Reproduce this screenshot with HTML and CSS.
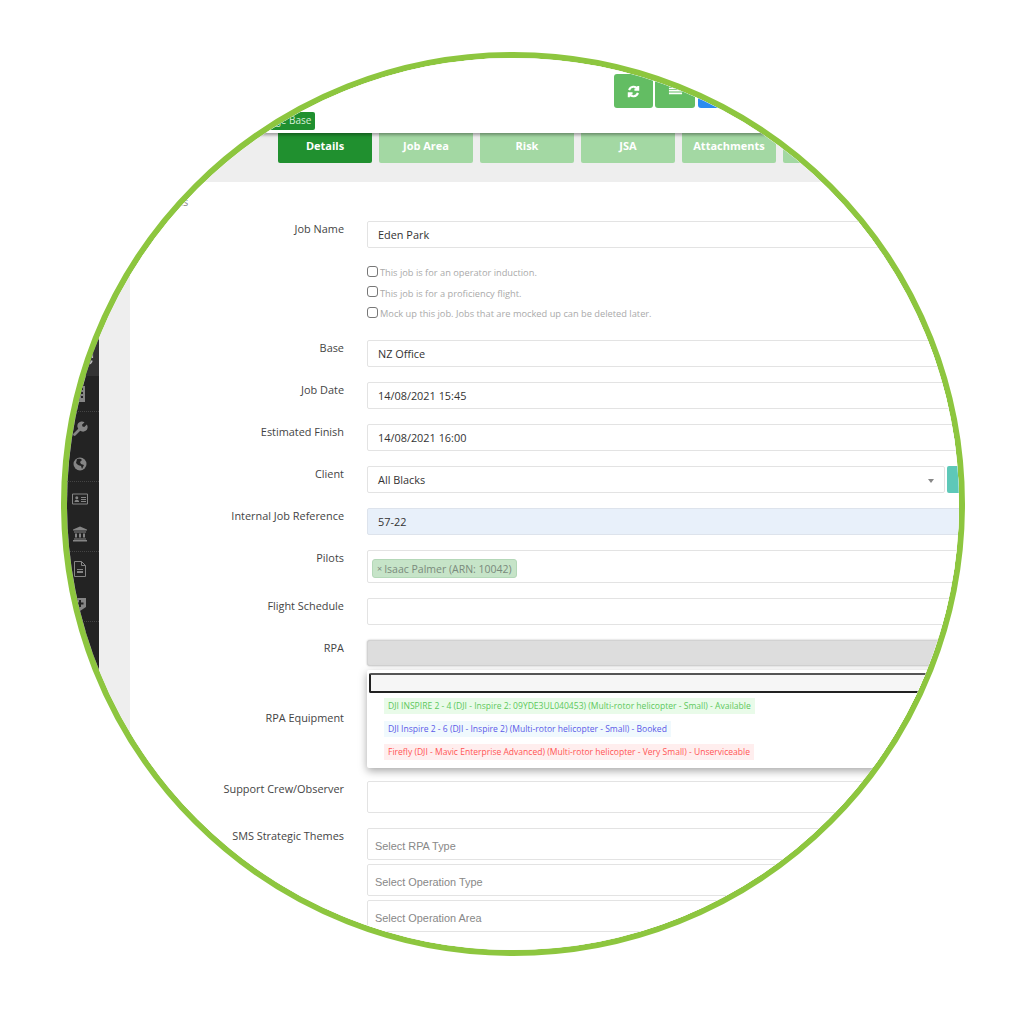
FILE: index.html
```html
<!DOCTYPE html>
<html lang="en">
<head>
<meta charset="utf-8">
<title>Job Details</title>
<link rel="stylesheet" href="styles.css">
</head>
<body>
<div class="ring">
  <div class="app">
    <nav class="sidebar">
      <div class="nav-item active"><svg class="ico" viewBox="0 0 16 16"><path d="M13 2v4h-4M3 14v-4h4M3.300 6.500A5 5 0 0 1 12.500 5.500M12.700 9.500A5 5 0 0 1 3.500 10.500" fill="none" stroke="currentColor" stroke-width="2.200"/></svg></div>
      <div class="nav-item sep"><svg class="ico" viewBox="0 0 16 16"><path d="M3 0h10v16H3z" fill="currentColor"/><path d="M5 2h2v2H5zM9 2h2v2H9zM5 6h2v2H5zM9 6h2v2H9zM5 10h2v2H5zM9 10h2v2H9z" fill="#232323"/></svg></div>
      <div class="nav-item"><svg class="ico" viewBox="0 0 16 16"><path d="M2.500 13.500 8 8" fill="none" stroke="currentColor" stroke-width="2.800" stroke-linecap="round"/><path d="M7.300 8.700A4.300 4.300 0 0 1 12.500 1.200L10 3.700l.5 1.800 1.800.5 2.500-2.500A4.300 4.300 0 0 1 7.300 8.700z" fill="currentColor"/></svg></div>
      <div class="nav-item sep"><svg class="ico" viewBox="0 0 16 16"><circle cx="8" cy="8" r="6.500" fill="currentColor"/><path d="M5 3c2-.5 4-.5 5 1L8 6l1 2 3 1-2 4-1-3-3-1-2-2z" fill="#232323"/></svg></div>
      <div class="nav-item"><svg class="ico" viewBox="0 0 16 16"><path d="M.5 3h15v10H.5z" fill="none" stroke="currentColor"/><circle cx="4.800" cy="6.800" r="1.500" fill="currentColor"/><path d="M2.500 11c0-3 4.600-3 4.600 0zM9 6h5v1H9zM9 8h5v1H9zM9 10h5v1H9z" fill="currentColor"/></svg></div>
      <div class="nav-item sep"><svg class="ico" viewBox="0 0 16 16"><path d="M8 .5 15 3.500v1H1v-1zM2 5.500h12v1H2zM3 7.500h2v4H3zM7 7.500h2v4H7zM11 7.500h2v4h-2zM2 12.500h12v1H2zM1 14h14v1.500H1z" fill="currentColor"/></svg></div>
      <div class="nav-item"><svg class="ico" viewBox="0 0 16 16"><path d="M2.500 .5h7l4 4v11h-11zM9.500 .5v4h4" fill="none" stroke="currentColor"/><path d="M5 8h6v1H5zM5 10h6v2H5z" fill="currentColor"/></svg></div>
      <div class="nav-item sep"><svg class="ico" viewBox="0 0 16 16"><path d="M2 2h12v9l-6 4-6-4z" fill="currentColor"/><path d="M7 4h2v2.500h2.500v2H9V11H7V8.500H4.500v-2H7z" fill="#232323"/></svg></div>
    </nav>
    <main class="main">
      <header class="top">
        <div class="actions">
          <span class="act"><svg class="act-ico" viewBox="0 0 16 16"><path d="M13 2v4h-4M3 14v-4h4M3.300 6.500A5 5 0 0 1 12.500 5.500M12.700 9.500A5 5 0 0 1 3.500 10.500" fill="none" stroke="#fff" stroke-width="2.200"/></svg></span>
          <span class="act wide"><svg class="act-ico" viewBox="0 0 16 16"><path d="M1 1h9v2H1zM1 4h11v1.500H1zM1 6.500h14V8H1zM1 9h14v2H1z" fill="#fff"/></svg></span>
          <span class="act blue"></span>
        </div>
        <span class="kb">Knowledge Base</span>
      </header>
      <div class="tabs">
        <span class="tab current">Details</span>
        <span class="tab">Job Area</span>
        <span class="tab">Risk</span>
        <span class="tab">JSA</span>
        <span class="tab">Attachments</span>
        <span class="tab">Notes</span>
      </div>
      <section class="panel">
        <h2 class="panel-title">Job Details</h2>
        <form class="form">
          <label class="lbl">Job Name</label>
          <div class="stack">
            <div class="field">Eden Park</div>
            <ul class="checks">
              <li><span class="box"></span>This job is for an operator induction.</li>
              <li><span class="box"></span>This job is for a proficiency flight.</li>
              <li><span class="box"></span>Mock up this job. Jobs that are mocked up can be deleted later.</li>
            </ul>
          </div>
          <label class="lbl">Base</label>
          <div class="field">NZ Office</div>
          <label class="lbl">Job Date</label>
          <div class="field">14/08/2021 15:45</div>
          <label class="lbl">Estimated Finish</label>
          <div class="field">14/08/2021 16:00</div>
          <label class="lbl">Client</label>
          <div class="client">
            <div class="field select">All Blacks<span class="caret"></span></div>
            <span class="add"></span>
          </div>
          <label class="lbl">Internal Job Reference</label>
          <div class="field readonly">57-22</div>
          <label class="lbl">Pilots</label>
          <div class="field tags"><span class="tag"><span class="tag-x">×</span>Isaac Palmer (ARN: 10042)</span></div>
          <label class="lbl">Flight Schedule</label>
          <div class="field"></div>
          <label class="lbl">RPA</label>
          <div class="rpa">
            <div class="field open"></div>
            <div class="drop">
              <div class="search"></div>
              <ul class="opts">
                <li><span class="opt ok">DJI INSPIRE 2 - 4 (DJI - Inspire 2: 09YDE3UL040453) (Multi-rotor helicopter - Small) - Available</span></li>
                <li><span class="opt booked">DJI Inspire 2 - 6 (DJI - Inspire 2) (Multi-rotor helicopter - Small) - Booked</span></li>
                <li><span class="opt bad">Firefly (DJI - Mavic Enterprise Advanced) (Multi-rotor helicopter - Very Small) - Unserviceable</span></li>
              </ul>
            </div>
          </div>
          <label class="lbl equip">RPA Equipment</label>
          <div class="field equip-field"></div>
          <label class="lbl">Support Crew/Observer</label>
          <div class="field tall"></div>
          <label class="lbl">SMS Strategic Themes</label>
          <div class="themes">
            <div class="field theme">Select RPA Type</div>
            <div class="field theme">Select Operation Type</div>
            <div class="field theme">Select Operation Area</div>
          </div>
        </form>
      </section>
    </main>
  </div>
</div>
</body>
</html>
```
FILE: styles.css
```css
* { box-sizing: border-box; }
html, body { margin: 0; padding: 0; background: #fff; }
body { font-family: "Open Sans", "Liberation Sans", sans-serif; width: 1024px; height: 1024px; overflow: hidden; }
.ring { width: 904px; height: 904px; margin: 52px 0 0 61px; border: 6px solid #8dc63f; border-radius: 50%; overflow: hidden; background: #fff; }
.app { display: flex; width: 100%; height: 100%; }
.sidebar { width: 32px; flex: none; background: #232323; padding-top: 283px; color: #858585; }
.nav-item { height: 35px; display: flex; align-items: center; justify-content: center; padding-right: 6px; }
.nav-item.active { background: #333; color: #bbb; padding: 0 0 0 8px; }
.nav-item.sep { height: 36px; margin-bottom: -1px; border-bottom: 1px dotted #444; }
.ico { width: 16px; height: 16px; }
.main { flex: 1; min-width: 0; background: #eee; display: flex; flex-direction: column; }
.top { height: 75px; flex: none; background: #fff; padding: 16px 0 0 515px; position: relative; box-shadow: 0 2px 3px rgba(0,0,0,.35); }
.actions { display: flex; gap: 2px; }
.act { width: 39px; height: 34px; background: #63bd63; border-radius: 3px; display: flex; align-items: center; justify-content: center; }
.act.wide { width: 40px; margin-right: 1px; }
.act.blue { background: #2b8cf0; }
.act-ico { width: 15px; height: 15px; }
.kb { position: absolute; left: 132px; top: 54px; height: 18px; line-height: 17px; padding: 0 4px; background: #20902f; color: #d8efd8; font-size: 10px; border-radius: 2px; white-space: nowrap; }
.tabs { flex: none; height: 49px; padding-left: 179px; display: flex; gap: 7px; align-items: flex-start; }
.tab { width: 94px; height: 30px; background: #a3d8a3; color: #fff; font-size: 11px; font-weight: 700; border-radius: 0 0 2px 2px; display: flex; align-items: center; justify-content: center; padding-bottom: 6px; }
.tab.current { background: #20902f; }
.panel { flex: 1; min-height: 0; margin-left: 31px; background: #fff; position: relative; }
.panel-title { margin: 0; position: absolute; left: 4px; top: 12px; font-size: 11px; font-weight: 400; color: #888; }
.form { display: grid; grid-template-columns: 214px 620px; column-gap: 23px; row-gap: 15px; padding-top: 39px; align-items: start; font-size: 10.900px; color: #444; }
.lbl { text-align: right; padding-top: 1px; line-height: 14px; font-size: 10.900px; color: #444; white-space: nowrap; }
.stack { display: flex; flex-direction: column; }
.field { height: 27px; border: 1px solid #e3e3e3; border-radius: 2px; padding: 0 10px 1px; display: flex; align-items: center; background: #fff; color: #333; font-size: 10.900px; }
.checks { list-style: none; margin: 18px 0 0; padding: 0; color: #aaa; font-size: 9.270px; display: flex; flex-direction: column; gap: 7.500px; height: 59px; }
.checks li { display: flex; align-items: center; height: 13px; white-space: nowrap; }
.box { width: 11px; height: 11px; border: 1px solid #777; border-radius: 3px; margin: -3px 2px 0 0; flex: none; }
.client { display: flex; gap: 2px; width: 620px; }
.select { width: 578px; flex: none; position: relative; }
.caret { position: absolute; right: 10px; top: 12px; border: 3px solid transparent; border-top: 4px solid #888; border-bottom: 0; }
.add { flex: 1; height: 27px; background: #5ec8b8; border-radius: 2px; }
.readonly { background: #e8f0fa; border-color: #dde3ec; }
.tags { height: 33px; padding: 4px 4px 0; }
.tag { height: 19px; padding: 0 4px; background: #c6e4c8; border: 1px solid #b4d8b8; border-radius: 3px; color: #7a8a7c; display: inline-flex; align-items: center; font-size: 10.500px; white-space: nowrap; }
.tag-x { margin-right: 2px; font-size: 9px; }
.rpa { position: relative; width: 620px; height: 27px; }
.open { height: 26px; background: #ddd; border: 1px solid #d2d2d2; border-radius: 3px; box-shadow: 0 0 2px rgba(0,0,0,.3); }
.drop { position: absolute; z-index: 2; left: 0; top: 30px; width: 620px; height: 98px; background: #fff; border-radius: 2px; box-shadow: 0 3px 8px rgba(0,0,0,.35); padding-top: 3px; }
.search { margin: 0 2px; height: 20px; background: #f6f6f6; border: 2px solid #222; border-top-color: #555; border-radius: 2px; }
.opts { list-style: none; margin: 5px 0 0; padding: 0 0 0 17px; display: flex; flex-direction: column; gap: 7px; font-size: 8.550px; }
.opts li { display: flex; height: 16px; }
.opt { padding: 0 4px; display: flex; align-items: center; white-space: nowrap; }
.ok { color: #5cc85c; background: #e9fbe9; }
.booked { color: #5a5ae8; background: #f0f9fd; }
.bad { color: #ff5555; background: #ffeeee; }
.equip { padding-top: 29px; }
.equip-field { height: 84px; }
.tall { height: 32px; }
.themes { display: flex; flex-direction: column; gap: 4px; }
.theme { height: 32px; padding: 3px 7px 0; color: #888; font-family: "Liberation Sans", Arial, sans-serif; font-size: 10.900px; }
```
